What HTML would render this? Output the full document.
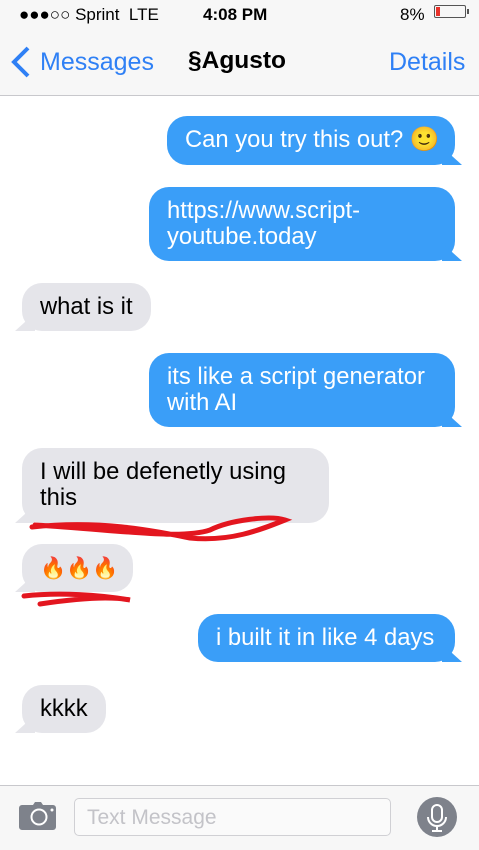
<!DOCTYPE html><html><head><meta charset="utf-8"><style>
body{margin:0;width:479px;height:849px;position:relative;background:#fff;font-family:"Liberation Sans",Arial,sans-serif;overflow:hidden}
.a{position:absolute}
.top{left:0;top:0;width:479px;height:95px;background:#f7f7f7;border-bottom:1px solid #c8c8cc}
.b{position:absolute;border-radius:20px;font-size:23.8px;line-height:26px;padding:11px 18px;box-sizing:border-box;white-space:nowrap}
.me{background:#3a9ef8;color:#fff}
.th{background:#e5e5ea;color:#000}
.me:after{content:"";position:absolute;right:-7px;bottom:0;width:20px;height:18px;background:#3a9ef8;clip-path:polygon(0 0,100% 100%,0 100%)}
.th:after{content:"";position:absolute;left:-7px;bottom:0;width:20px;height:18px;background:#e5e5ea;clip-path:polygon(100% 0,100% 100%,0 100%)}
</style></head><body>
<div class="a top"></div>
<div class="a" style="left:19px;top:4px;font-size:17px;line-height:22px">●●●○○ Sprint&nbsp; LTE</div>
<div class="a" style="left:203px;top:4px;font-size:17px;line-height:22px;font-weight:bold">4:08 PM</div>
<div class="a" style="left:400px;top:4px;font-size:17px;line-height:22px">8%</div>
<div class="a" style="left:434px;top:5px;width:32px;height:13px;border:1px solid #555;border-radius:2px;box-sizing:border-box"><div style="position:absolute;left:1px;top:1px;width:4px;height:9px;background:#e8322a"></div></div>
<div class="a" style="left:467px;top:9px;width:2px;height:5px;background:#555"></div>
<svg class="a" style="left:10px;top:46px" width="22" height="32"><path d="M18 2 L4 16 L18 30" stroke="#2f80f5" stroke-width="4" fill="none"/></svg>
<div class="a" style="left:40px;top:48px;font-size:25px;color:#2f80f5">Messages</div>
<div class="a" style="left:188px;top:47px;font-size:24.5px;font-weight:bold">§Agusto</div>
<div class="a" style="left:389px;top:48px;font-size:25px;color:#2f80f5">Details</div>

<div class="b me" style="left:167px;top:116px;width:288px;height:49px">Can you try this out? 🙂</div>
<div class="b me" style="left:149px;top:187px;width:306px;height:74px">https://www.script-<br>youtube.today</div>
<div class="b th" style="left:22px;top:283px;width:129px;height:48px">what is it</div>
<div class="b me" style="left:149px;top:353px;width:306px;height:74px">its like a script generator<br>with AI</div>
<div class="b th" style="left:22px;top:448px;width:307px;height:75px">I will be defenetly using<br>this</div>
<div class="b th" style="left:22px;top:544px;width:111px;height:48px;font-size:21px;padding-top:12px">🔥🔥🔥</div>
<div class="b me" style="left:198px;top:614px;width:257px;height:48px">i built it in like 4 days</div>
<div class="b th" style="left:22px;top:685px;width:84px;height:48px">kkkk</div>

<svg class="a" style="left:0;top:0" width="479" height="849">
<path d="M32 527 C100 520 150 530 190 538 C230 542 260 530 285 520 C270 515 230 520 210 530 C180 540 120 530 35 525" stroke="#e3161f" stroke-width="5" fill="none" stroke-linecap="round"/>
<path d="M24 596 C60 592 100 595 130 600 C110 596 80 598 40 604" stroke="#e3161f" stroke-width="5" fill="none" stroke-linecap="round"/>
</svg>

<div class="a" style="left:0;top:785px;width:479px;height:64px;background:#f7f7f7;border-top:1px solid #c8c8cc"></div>
<svg class="a" style="left:19px;top:801px" width="38" height="29"><path d="M7 4h7l2-3h6l2 3h10a3 3 0 0 1 3 3v19a3 3 0 0 1-3 3H3a3 3 0 0 1-3-3V7a3 3 0 0 1 3-3z" fill="#7e828b"/><circle cx="20" cy="16" r="7.5" fill="none" stroke="#fff" stroke-width="2"/><circle cx="33" cy="9" r="1.5" fill="#fff"/></svg>
<div class="a" style="left:74px;top:798px;width:317px;height:38px;border:1px solid #d0d0d4;border-radius:5px;box-sizing:border-box;background:#fafafa;font-size:21px;color:#c3c3c8;padding:7px 12px">Text Message</div>
<svg class="a" style="left:417px;top:797px" width="40" height="40"><circle cx="20" cy="20" r="20" fill="#7e828b"/><rect x="15" y="8" width="10" height="17" rx="5" fill="none" stroke="#fff" stroke-width="2"/><path d="M11 20a9 9 0 0 0 18 0M20 29v5M15 34h10" stroke="#fff" stroke-width="2" fill="none"/></svg>
</body></html>
